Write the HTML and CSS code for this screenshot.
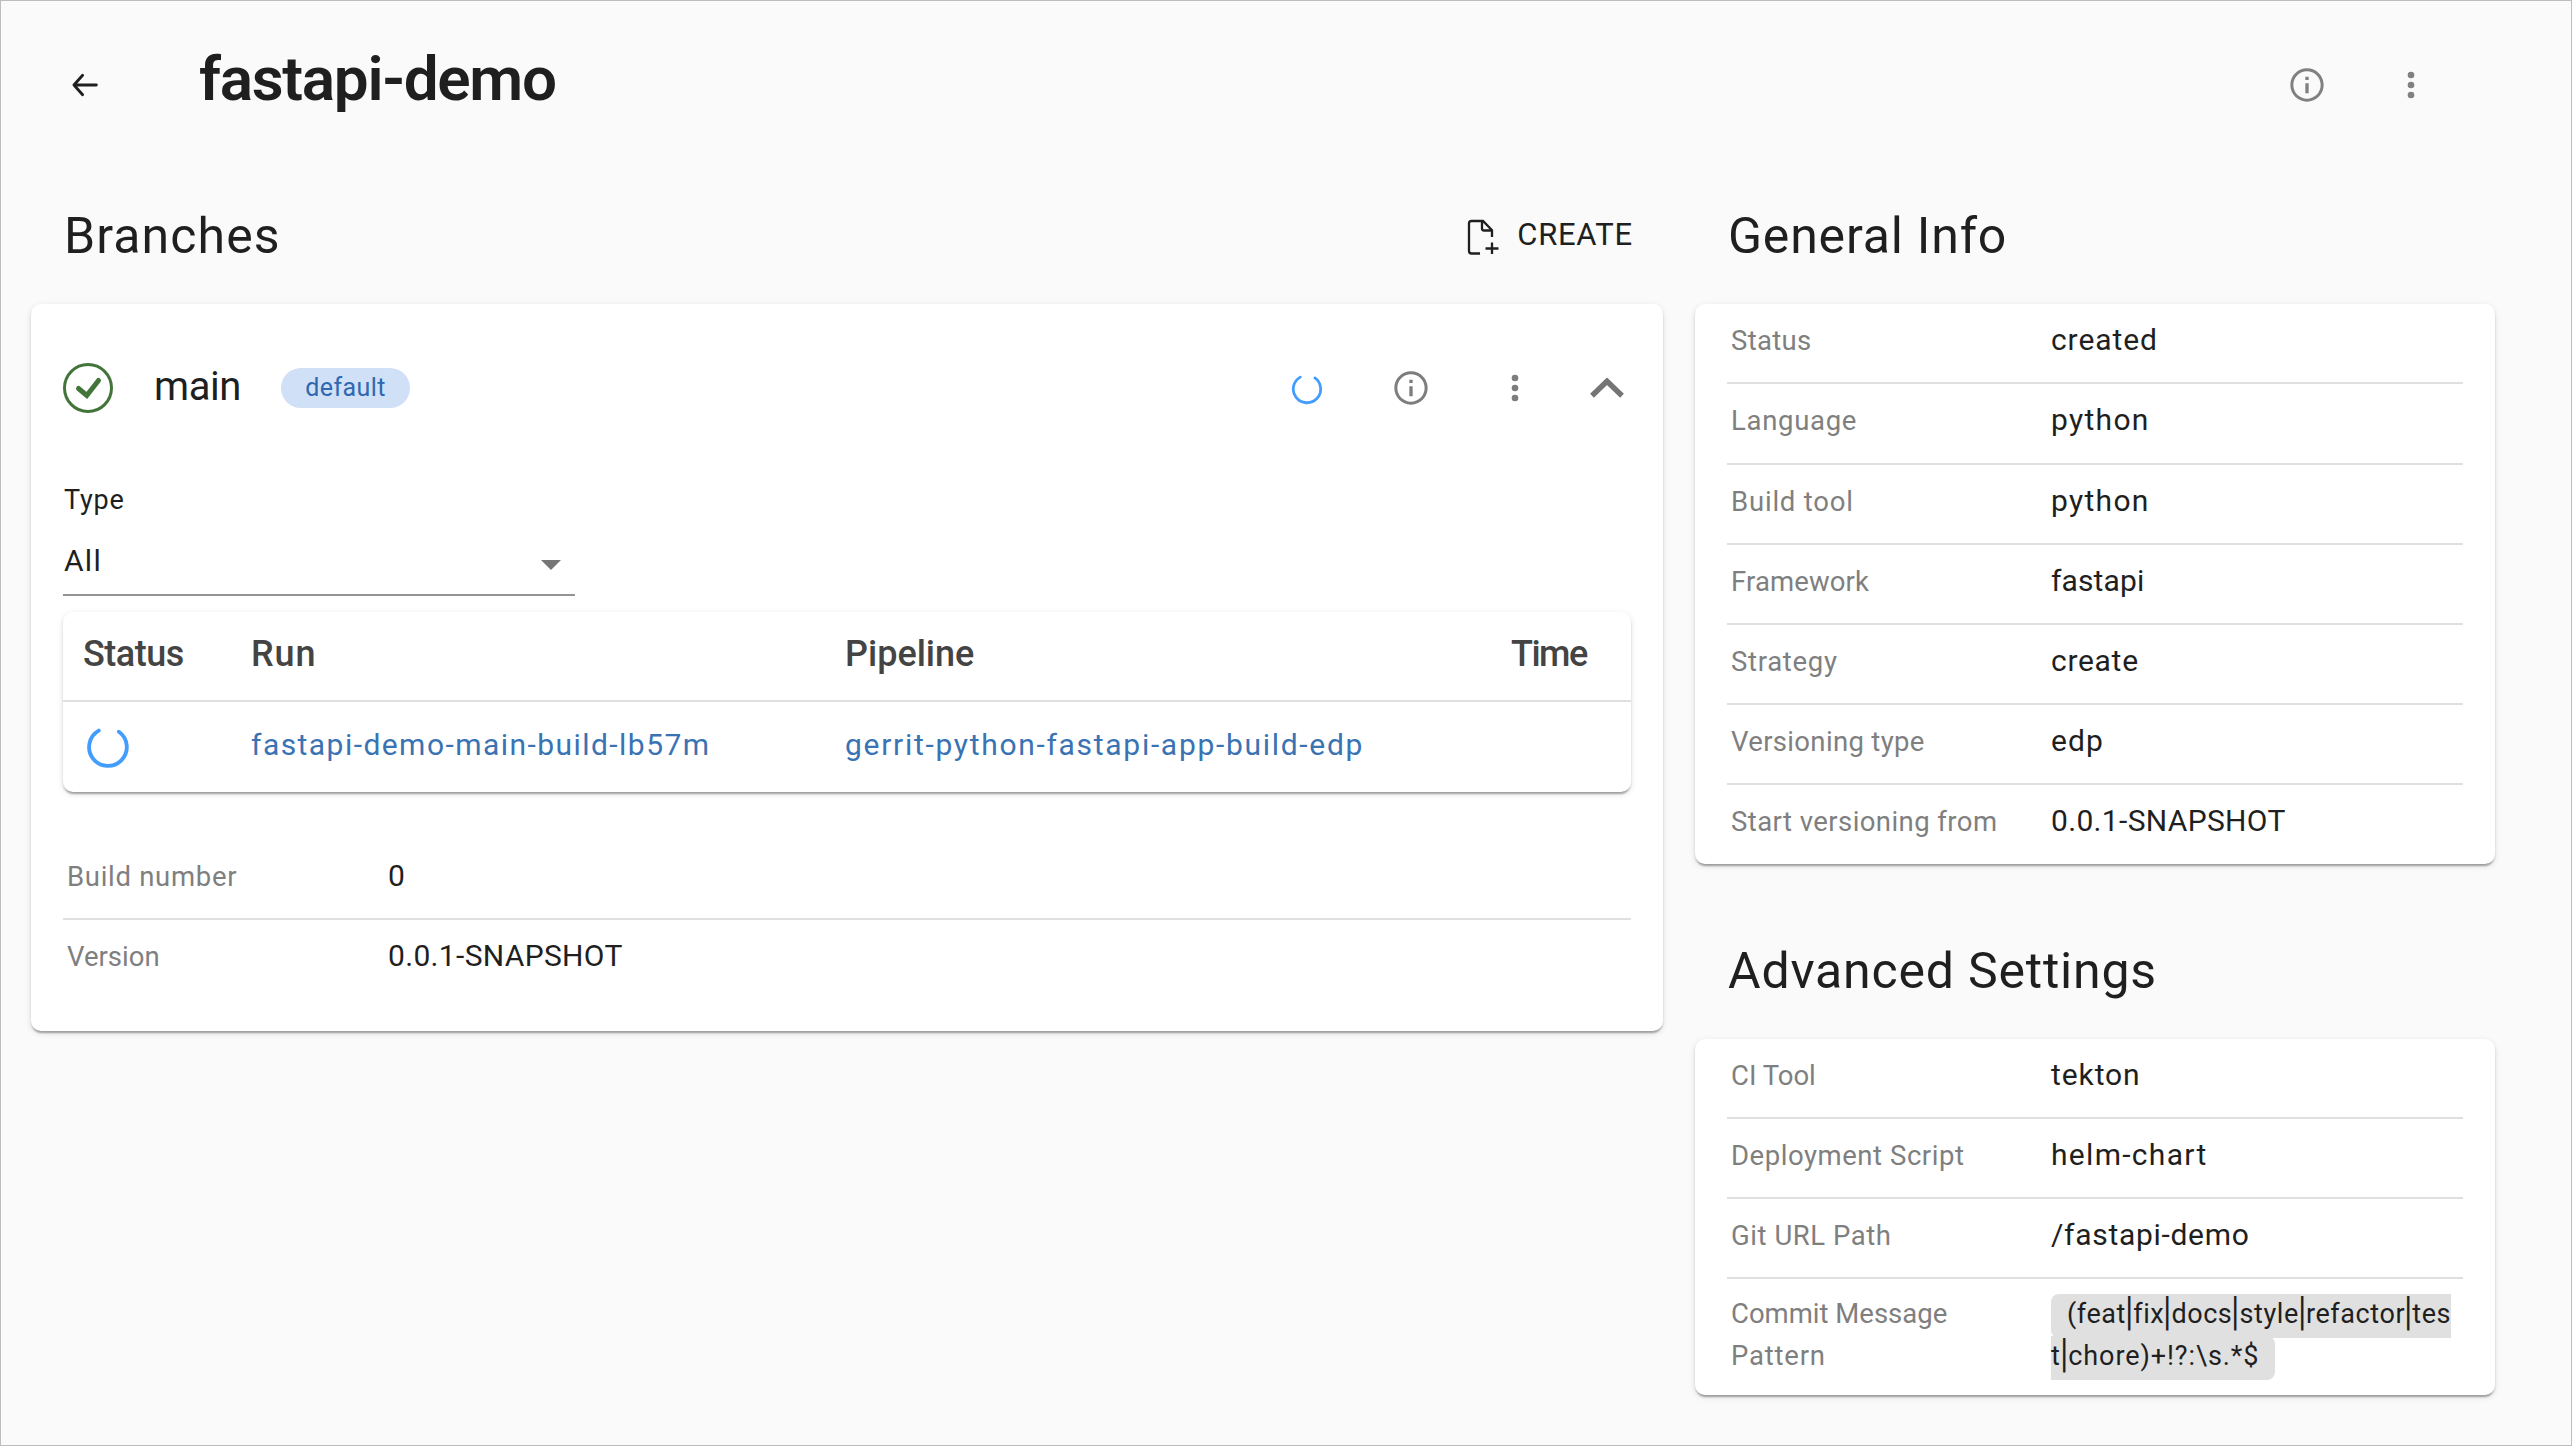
FILE: index.html
```html
<!DOCTYPE html>
<html lang="en">
<head>
<meta charset="utf-8">
<title>fastapi-demo</title>
<link rel="stylesheet" href="styles.css">
</head>
<body>
<svg class="defs" width="0" height="0" aria-hidden="true">
  <symbol id="info" viewBox="0 0 24 24"><path fill="currentColor" d="M11 7h2v2h-2zm0 4h2v6h-2zm1-9C6.480 2 2 6.480 2 12s4.480 10 10 10 10-4.480 10-10S17.520 2 12 2zm0 18.200c-4.520 0-8.200-3.680-8.200-8.200S7.480 3.800 12 3.800s8.200 3.680 8.200 8.200-3.680 8.200-8.200 8.200z"/></symbol>
  <symbol id="more" viewBox="0 0 24 24"><g fill="currentColor"><circle cx="12" cy="6" r="2"/><circle cx="12" cy="12" r="2"/><circle cx="12" cy="18" r="2"/></g></symbol>
  <symbol id="spinner" viewBox="0 0 32 32"><path d="M9.300 4.100A13.700 13.700 0 1 0 23.900 4.900" fill="none" stroke="currentColor" stroke-width="2.800" stroke-linecap="round"/></symbol>
</svg>
<div class="page">
  <header class="topbar">
    <svg class="back" viewBox="0 0 24 22"><path d="M22.500 11H1.800M9.800 2L1.800 11l8 9" fill="none" stroke="currentColor" stroke-width="2.600" stroke-linecap="round" stroke-linejoin="round"/></svg>
    <h1 class="title">fastapi-demo</h1>
    <div class="actions">
      <svg class="icon"><use href="#info"/></svg>
      <svg class="icon"><use href="#more"/></svg>
    </div>
  </header>
  <div class="columns">
    <main class="main-col">
      <div class="heading">
        <h2 class="tr-11">Branches</h2>
        <button class="create">
          <svg class="file" viewBox="0 0 32 36"><path d="M13 34.500H4.500A2.500 2.500 0 0 1 2 32V4.500A2.500 2.500 0 0 1 4.500 2H16l9 9.200V18M15 2.500v7a2 2 0 0 0 2 2h8M25 23.500v11.500M18.500 29.500h13" fill="none" stroke="currentColor" stroke-width="2.300"/></svg>
          <span>CREATE</span>
        </button>
      </div>
      <section class="card branch">
        <div class="branch-head">
          <svg class="check" viewBox="0 0 50 50"><circle cx="25" cy="25" r="23.500" fill="none" stroke="currentColor" stroke-width="3"/><path d="M15.500 25.500l8.300 7L35.500 17.500" fill="none" stroke="currentColor" stroke-width="5" stroke-linecap="round"/></svg>
          <span class="branch-name">main</span>
          <span class="chip">default</span>
          <div class="actions branch-actions">
            <svg class="spin-small"><use href="#spinner"/></svg>
            <svg class="icon"><use href="#info"/></svg>
            <svg class="icon"><use href="#more"/></svg>
            <svg class="chevron" viewBox="0 0 34 20"><path d="M2 17.800L17 3.200l15 14.600" fill="none" stroke="currentColor" stroke-width="5.400"/></svg>
          </div>
        </div>
        <div class="field">
          <label class="field-label">Type</label>
          <div class="select"><span>All</span><svg class="caret" viewBox="0 0 20 10"><path d="M0 0h20L10 10z" fill="currentColor"/></svg></div>
        </div>
        <div class="runs">
          <div class="runs-row runs-head"><span class="tr-m4">Status</span><span class="tr-9">Run</span><span>Pipeline</span><span class="tr-m16">Time</span></div>
          <div class="runs-row runs-body">
            <span class="run-status"><svg class="spin"><use href="#spinner"/></svg></span>
            <a class="tr-15">fastapi-demo-main-build-lb57m</a>
            <a class="tr-17">gerrit-python-fastapi-app-build-edp</a>
          </div>
        </div>
        <dl class="info build">
          <div class="row"><dt class="tr-7">Build number</dt><dd>0</dd></div>
          <div class="row"><dt>Version</dt><dd class="tr-3">0.0.1-SNAPSHOT</dd></div>
        </dl>
      </section>
    </main>
    <aside class="side-col">
      <div class="heading"><h2 class="tr-8">General Info</h2></div>
      <dl class="card info">
        <div class="row"><dt class="tr-3">Status</dt><dd class="tr-9">created</dd></div>
        <div class="row tall"><dt class="tr-7">Language</dt><dd class="tr-13">python</dd></div>
        <div class="row"><dt class="tr-8">Build tool</dt><dd class="tr-13">python</dd></div>
        <div class="row"><dt class="tr-1">Framework</dt><dd class="tr-1">fastapi</dd></div>
        <div class="row"><dt class="tr-7">Strategy</dt><dd class="tr-7">create</dd></div>
        <div class="row"><dt class="tr-3">Versioning type</dt><dd class="tr-11">edp</dd></div>
        <div class="row"><dt class="tr-4">Start versioning from</dt><dd class="tr-3">0.0.1-SNAPSHOT</dd></div>
      </dl>
      <div class="heading second"><h2 class="tr-8">Advanced Settings</h2></div>
      <dl class="card info">
        <div class="row"><dt>CI Tool</dt><dd class="tr-9">tekton</dd></div>
        <div class="row"><dt class="tr-5">Deployment Script</dt><dd class="tr-13">helm-chart</dd></div>
        <div class="row"><dt class="tr-5">Git URL Path</dt><dd class="tr-7">/fastapi-demo</dd></div>
        <div class="row wrap"><dt>Commit Message<br><span class="tr-8">Pattern</span></dt><dd><code class="pattern">(feat<i>|</i>fix<i>|</i>docs<i>|</i>style<i>|</i>refactor<i>|</i>tes<br><span class="tr-9">t<i>|</i>chore)+!?:\s.*$</span></code></dd></div>
      </dl>
    </aside>
  </div>
</div>
</body>
</html>
```
FILE: styles.css
```css
* { box-sizing: border-box; }

body {
  margin: 0;
  font-family: Roboto, "Liberation Sans", sans-serif;
  color: #1f1f1f;
}

h1, h2, dl, dt, dd { margin: 0; font-weight: 400; }
svg { display: block; flex: none; }
.defs { position: absolute; }

.page {
  width: 2572px;
  height: 1446px;
  border: 1px solid #bdbdbd;
  background: #fafafa;
  padding: 0 76px 0 30px;
  overflow: hidden;
}

/* Header */
.topbar { display: flex; align-items: center; height: 168px; padding: 0 64px 0 41px; }
.back { width: 26px; height: 24px; }
.title {
  margin-left: 101px;
  padding-bottom: 12px;
  font-size: 62px;
  font-weight: 600;
  line-height: 72px;
  letter-spacing: -1.3px;
}
.actions { display: flex; align-items: center; gap: 64px; margin-left: auto; color: #808080; }
.icon { width: 40px; height: 40px; }

/* Columns */
.columns { display: grid; grid-template-columns: 1632px 800px; column-gap: 32px; align-items: start; }
.heading { display: flex; align-items: center; justify-content: space-between; height: 135px; padding: 0 30px 0 33px; }
.heading.second { margin-top: 40px; }
h2 { font-size: 50px; line-height: 60px; padding-bottom: 2px; }
.create {
  display: flex; align-items: center; gap: 18px;
  border: 0; padding: 0; background: none; color: inherit;
  font: 400 31px/36px Roboto, sans-serif; letter-spacing: .75px;
}
.create span { padding-bottom: 4px; }
.file { width: 32px; height: 36px; }

.card {
  background: #fff;
  border-radius: 10px;
  box-shadow: 0 4px 2px -2px rgba(0, 0, 0, .2), 0 2px 2px rgba(0, 0, 0, .14), 0 2px 6px rgba(0, 0, 0, .12);
}

/* Branch card */
.branch { height: 727px; padding: 0 32px; }
.branch-head { display: flex; align-items: center; height: 168px; }
.check { width: 50px; height: 50px; color: #43753a; }
.branch-name { margin-left: 41px; padding-bottom: 2px; font-size: 40px; line-height: 48px; letter-spacing: -.4px; }
.chip {
  margin-left: 40px; width: 129px; height: 40px; border-radius: 20px;
  background: #d0e0f7; color: #2f67b0;
  font-size: 25px; line-height: 40px; letter-spacing: .42px; text-align: center;
}
.branch-actions { margin-right: 7px; color: #7d7d7d; }
.spin-small { width: 32px; height: 32px; margin: 2px 4px 0 0; color: #429dff; }
.chevron { width: 34px; height: 20px; margin-left: -9px; color: #757575; }

.field { width: 512px; padding-top: 13px; }
.field-label { display: block; font-size: 27px; line-height: 30px; letter-spacing: .8px; padding-left: 1px; }
.select {
  display: flex; align-items: center; justify-content: space-between;
  margin-top: 13px; height: 68px; padding: 0 14px 0 1px;
  border-bottom: 2px solid #949494;
  font-size: 30px; letter-spacing: 1.3px;
}
.select span { padding-bottom: 2px; }
.caret { width: 20px; height: 10px; margin-top: 8px; color: #757575; }

.runs {
  margin-top: 16px;
  border-radius: 10px;
  box-shadow: 0 4px 2px -2px rgba(0, 0, 0, .2), 0 2px 2px rgba(0, 0, 0, .14), 0 2px 6px rgba(0, 0, 0, .12);
}
.runs-row { display: grid; grid-template-columns: 168px 594px 666px 1fr; align-items: center; height: 90px; padding-left: 20px; }
.runs-head { border-bottom: 2px solid #e0e0e0; padding-bottom: 5px; font-size: 36px; font-weight: 500; color: #444; }
.runs-body { padding-bottom: 6px; font-size: 30px; color: #3a73b3; }
.run-status { padding: 6px 0 0 3px; }
.spin { width: 44px; height: 44px; color: #429dff; }

/* Label / value rows */
.info .row {
  display: grid; grid-template-columns: 321px 1fr; align-items: baseline;
  height: 80px; padding: 21px 0 0 4px;
  border-bottom: 2px solid #e0e0e0;
  line-height: 30px;
}
.info .row.tall { height: 81px; }
.info .row:last-child { height: 79px; border-bottom: 0; }
.info dt { font-size: 27.5px; color: #7f7f7f; }
.info dd { font-size: 30px; }
.card.info { padding: 0 32px; }
.card.info .row { grid-template-columns: 320px 1fr; }
.build { margin-top: 48px; }
.info .row.wrap:last-child { height: 116px; padding-top: 14px; line-height: 42px; }
.info .row.wrap dd { font-size: 27px; }

.pattern {
  padding: 4px 16px 8px;
  border-radius: 8px;
  background: #e0e0e0;
  font-family: inherit;
  letter-spacing: .57px;
  white-space: nowrap;
}
.pattern i { display: inline-block; font-style: normal; line-height: 30px; transform: translateY(-3px) scale(1.2, 1.5); }

/* Letter tracking */
.tr-m16 { letter-spacing: -1.5px; }
.tr-m4 { letter-spacing: -.5px; }
.tr-1 { letter-spacing: .13px; }
.tr-3 { letter-spacing: .33px; }
.tr-4 { letter-spacing: .43px; }
.tr-5 { letter-spacing: .55px; }
.tr-7 { letter-spacing: .7px; }
.tr-8 { letter-spacing: .8px; }
.tr-9 { letter-spacing: .91px; }
.tr-11 { letter-spacing: 1.1px; }
.tr-13 { letter-spacing: 1.3px; }
.tr-15 { letter-spacing: 1.45px; }
.tr-17 { letter-spacing: 1.7px; }
```
